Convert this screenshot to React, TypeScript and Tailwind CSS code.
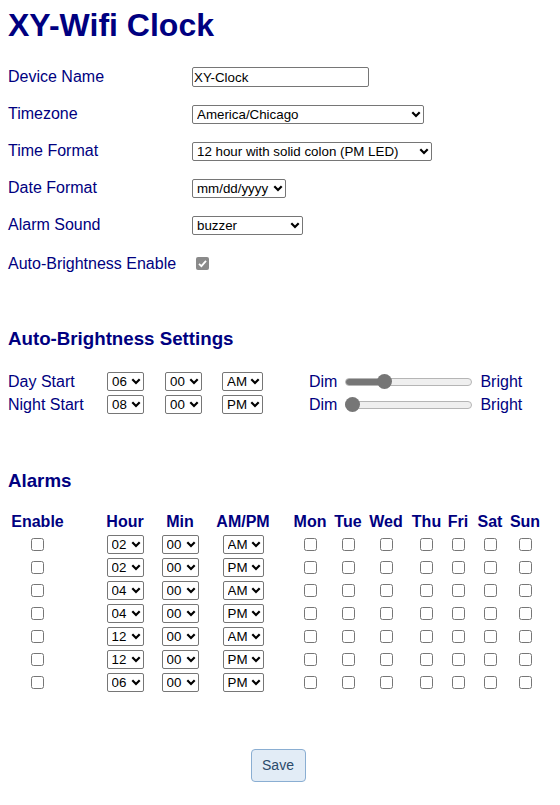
import React from "react";

const hours = ["01", "02", "03", "04", "05", "06", "07", "08", "09", "10", "11", "12"];
const mins = ["00", "15", "30", "45"];
const days = ["Mon", "Tue", "Wed", "Thu", "Fri", "Sat", "Sun"];

// column boxes for the alarm table: width + left offset so each column centres where the page had it
const cols = {
  enable: "w-[59px]",
  hour: "w-[44px] ml-[36px]",
  min: "w-[44px] ml-[11px]",
  ampm: "w-[52px] ml-[15px]",
};
const dayCols = [
  "w-[34px] ml-[24px]",
  "w-[34px] ml-[4px]",
  "w-[34px] ml-[4px]",
  "w-[30px] ml-[8.5px]",
  "w-[24px] ml-[4.5px]",
  "w-[28px] ml-[6px]",
  "w-[30px] ml-[6px]",
];

const alarms = [
  { h: "02", ap: "AM" },
  { h: "02", ap: "PM" },
  { h: "04", ap: "AM" },
  { h: "04", ap: "PM" },
  { h: "12", ap: "AM" },
  { h: "12", ap: "PM" },
  { h: "06", ap: "PM" },
];

function Sel({ value, options, className }: { value: string; options: string[]; className: string }) {
  return (
    <div className={"relative h-[19px] " + className}>
      <select
        defaultValue={value}
        className="block appearance-none w-full h-full border border-[#767676] rounded-[2px] bg-white text-black text-[13.33px] leading-[17px] pl-[4px] pr-[14px]"
      >
        {options.map((o) => (
          <option key={o} value={o}>
            {o}
          </option>
        ))}
      </select>
      <svg
        viewBox="0 0 10 7"
        className="absolute right-[3px] top-[6px] w-[10px] h-[7px] pointer-events-none"
      >
        <path d="M1.3 1.3 L5 5 L8.7 1.3" fill="none" stroke="#000" strokeWidth="2.2" />
      </svg>
    </div>
  );
}

function Check() {
  return <input type="checkbox" className="block w-[13px] h-[13px]" />;
}

function Slider({ pos }: { pos: number }) {
  // disabled range, drawn: pos is the thumb centre in px from the track's left end
  return (
    <div className="relative w-[127px] h-[16px] ml-[8px] flex items-center">
      <div className="w-full h-[8px] rounded-full border border-[#b5b5b5] bg-[#efefef] overflow-hidden flex">
        <div className="h-full bg-[#767676]" style={{ width: pos }} />
      </div>
      <div
        className="absolute top-[0.5px] w-[15px] h-[15px] rounded-full bg-[#767676]"
        style={{ left: pos - 7.5 }}
      />
    </div>
  );
}

function FormRow({ label, children }: { label: string; children: React.ReactNode }) {
  return (
    <div className="flex items-center h-[37px]">
      <div className="w-[184px]">{label}</div>
      {children}
    </div>
  );
}

function BrightRow({ label, h, ap, pos }: { label: string; h: string; ap: string; pos: number }) {
  return (
    <div className="flex items-center h-[23px]">
      <div className="w-[99px]">{label}</div>
      <Sel value={h} options={hours} className="w-[37px]" />
      <Sel value="00" options={mins} className="w-[37px] ml-[21px]" />
      <Sel value={ap} options={["AM", "PM"]} className="w-[41px] ml-[20px]" />
      <span className="ml-[46px]">Dim</span>
      <Slider pos={pos} />
      <span className="ml-[8px]">Bright</span>
    </div>
  );
}

export default function App() {
  return (
    <div className="px-2 pb-4 font-['Liberation_Sans',Arial,sans-serif] text-[16px] text-[#000080] bg-white min-h-[805px]">
      <h1 className="mt-[7px] text-[32px] leading-[37px] font-bold">XY-Wifi Clock</h1>

      <div className="mt-[14.5px] flex flex-col">
        <FormRow label="Device Name">
          <input
            type="text"
            defaultValue="XY-Clock"
            className="block w-[177px] h-[20px] border border-[#767676] rounded-[2px] px-[1px] text-[13.33px] text-black"
          />
        </FormRow>
        <FormRow label="Timezone">
          <Sel
            value="America/Chicago"
            options={["America/New_York", "America/Chicago", "America/Denver", "America/Los_Angeles"]}
            className="w-[232px]"
          />
        </FormRow>
        <FormRow label="Time Format">
          <Sel
            value="12 hour with solid colon (PM LED)"
            options={["12 hour with solid colon (PM LED)", "12 hour with blinking colon", "24 hour"]}
            className="w-[240px]"
          />
        </FormRow>
        <FormRow label="Date Format">
          <Sel value="mm/dd/yyyy" options={["mm/dd/yyyy", "dd/mm/yyyy", "yyyy/mm/dd"]} className="w-[94px]" />
        </FormRow>
        <FormRow label="Alarm Sound">
          <Sel value="buzzer" options={["buzzer", "beep", "chime"]} className="w-[111px]" />
        </FormRow>
        <div className="flex items-center h-[39px]">
          <div className="w-[184px] pt-[2px]">Auto-Brightness Enable</div>
          <div className="relative w-[13px] h-[13px] ml-[4px] rounded-[2px] bg-[#8a8a8a]">
            <svg viewBox="0 0 13 13" className="absolute inset-0 w-[13px] h-[13px]">
              <path d="M3 6.8 L5.4 9.2 L10 3.9" fill="none" stroke="#fff" strokeWidth="1.8" />
            </svg>
          </div>
        </div>
      </div>

      <h3 className="mt-[45.5px] text-[18.72px] leading-[22px] font-bold">Auto-Brightness Settings</h3>
      <div className="mt-[20px] flex flex-col">
        <BrightRow label="Day Start" h="06" ap="AM" pos={39} />
        <BrightRow label="Night Start" h="08" ap="PM" pos={7.5} />
      </div>

      <h3 className="mt-[54px] text-[18.72px] leading-[22px] font-bold">Alarms</h3>
      <div className="mt-[18px] flex flex-col">
        <div className="flex items-center h-[23px] font-bold">
          <div className={cols.enable + " flex justify-center"}>Enable</div>
          <div className={cols.hour + " flex justify-center"}>Hour</div>
          <div className={cols.min + " flex justify-center"}>Min</div>
          <div className={cols.ampm + " flex justify-center"}>AM/PM</div>
          {days.map((d, i) => (
            <div key={d} className={dayCols[i] + " flex justify-center"}>
              {d}
            </div>
          ))}
        </div>
        {alarms.map((a, r) => (
          <div key={r} className="flex items-center h-[23px]">
            <div className={cols.enable + " flex justify-center"}>
              <Check />
            </div>
            <div className={cols.hour + " flex justify-center"}>
              <Sel value={a.h} options={hours} className="w-[37px]" />
            </div>
            <div className={cols.min + " flex justify-center"}>
              <Sel value="00" options={mins} className="w-[37px]" />
            </div>
            <div className={cols.ampm + " flex justify-center"}>
              <Sel value={a.ap} options={["AM", "PM"]} className="w-[41px]" />
            </div>
            {days.map((d, i) => (
              <div key={d} className={dayCols[i] + " flex justify-center"}>
                <Check />
              </div>
            ))}
          </div>
        ))}
      </div>

      <div className="mt-[55px] pr-[4px] flex justify-center">
        <button className="w-[55px] h-[33px] rounded-[4px] border border-[#8aaed2] bg-[#e2ecf6] text-[14px] text-[#2b4a6b]">
          Save
        </button>
      </div>
    </div>
  );
}
